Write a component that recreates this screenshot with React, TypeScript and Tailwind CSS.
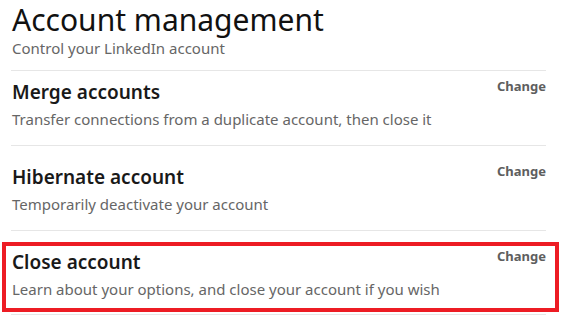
const rows = [
  {
    title: "Merge accounts",
    text: "Transfer connections from a duplicate account, then close it",
    first: true,
  },
  {
    title: "Hibernate account",
    text: "Temporarily deactivate your account",
  },
  {
    title: "Close account",
    text: "Learn about your options, and close your account if you wish",
    marked: true,
  },
];

function RowBody({ title, text }: { title: string; text: string }) {
  return (
    <div className="flex justify-between">
      <div>
        <h2 className="text-[19px] font-semibold leading-[26px] text-[#191919]">{title}</h2>
        <p className="mt-[4px] text-[15px] leading-[20px] text-[#666666]">{text}</p>
      </div>
      <button className="self-start text-[13px] font-bold leading-[14px] text-[#5e5e5e]">Change</button>
    </div>
  );
}

export default function App() {
  return (
    <main
      className="h-[321px] w-[564px] overflow-hidden bg-white"
      style={{ fontFamily: '"Noto Sans", "Open Sans", sans-serif' }}
    >
      <header className="pl-[12px] pt-[2px]">
        <h1 className="text-[30px] leading-[36px] text-[#111111]">Account management</h1>
        <p className="mt-[1px] text-[15px] leading-[19px] text-[#666666]">Control your LinkedIn account</p>
      </header>
      <ul className="mt-[12px]">
        {rows.map((row) =>
          row.marked ? (
            <li key={row.title} className="ml-[11px] w-[535px] border-t border-[#e6e6e6]">
              <div className="-ml-[9px] mt-[11px] w-[557px] border-4 border-[#ed1c24] pb-[9px] pl-[6px] pr-[9px] pt-[3px]">
                <RowBody title={row.title} text={row.text} />
              </div>
            </li>
          ) : (
            <li
              key={row.title}
              className={
                row.first
                  ? "ml-[11px] w-[535px] border-t border-[#e6e6e6] pb-[16px] pl-[1px] pt-[8px]"
                  : "ml-[11px] w-[535px] border-t border-[#e6e6e6] pb-[16px] pl-[1px] pt-[18px]"
              }
            >
              <RowBody title={row.title} text={row.text} />
            </li>
          )
        )}
      </ul>
      <div className="ml-[11px] mt-[2px] w-[535px] border-t border-[#e6e6e6]" />
    </main>
  );
}
